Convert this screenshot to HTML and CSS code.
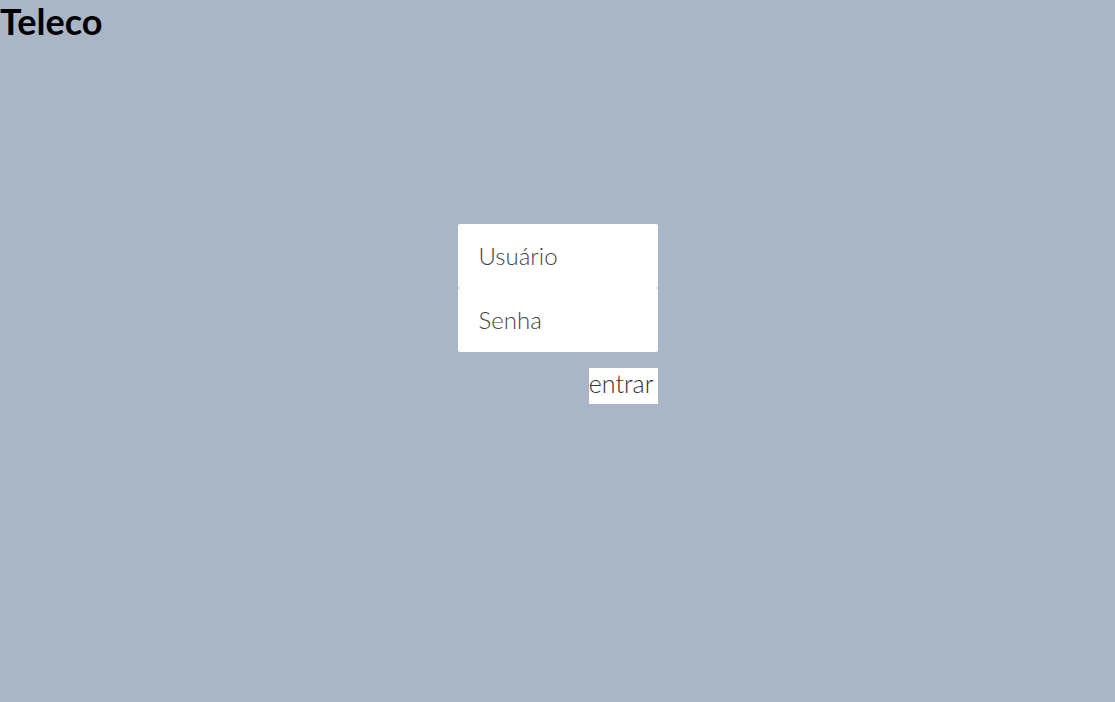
FILE: index.html
```html
<!DOCTYPE html>
<html lang="pt">
<head>
<meta charset="utf-8">
<title>Teleco</title>
<link rel="stylesheet" href="styles.css">
</head>
<body>
<h1 class="brand">Teleco</h1>
<main class="stage">
  <form class="login">
    <div class="fields">
      <input class="field" type="text" placeholder="Usuário">
      <input class="field" type="password" placeholder="Senha">
    </div>
    <button class="submit" type="button">entrar</button>
  </form>
</main>
</body>
</html>
```
FILE: styles.css
```css
html, body {
  margin: 0;
  height: 100%;
}
body {
  background: #aab5c6;
  font-family: Lato, "Open Sans", sans-serif;
}
.brand {
  margin: 0;
  font-size: 36px;
  font-weight: 700;
  color: #000;
  line-height: 42px;
}
.stage {
  display: flex;
  justify-content: center;
  padding-top: 182px;
}
.login {
  display: flex;
  flex-direction: column;
  align-items: flex-end;
  width: 200px;
}
.fields {
  display: flex;
  flex-direction: column;
  width: 200px;
}
.field {
  box-sizing: border-box;
  width: 200px;
  height: 64px;
  border: none;
  border-radius: 2px;
  margin: 0;
  padding: 0 20px 2px 21px;
  background: #fff;
  font-family: Lato, sans-serif;
  font-weight: 300;
  font-size: 24px;
  color: #333;
  outline: none;
}
.field::placeholder {
  color: #444;
}
.submit {
  box-sizing: border-box;
  margin-top: 16px;
  height: 36px;
  padding: 0 4px 6px 0;
  border: none;
  border-radius: 0;
  background: #fff;
  font-family: Lato, sans-serif;
  font-weight: 300;
  font-size: 25px;
  color: #333;
  cursor: pointer;
}
```
